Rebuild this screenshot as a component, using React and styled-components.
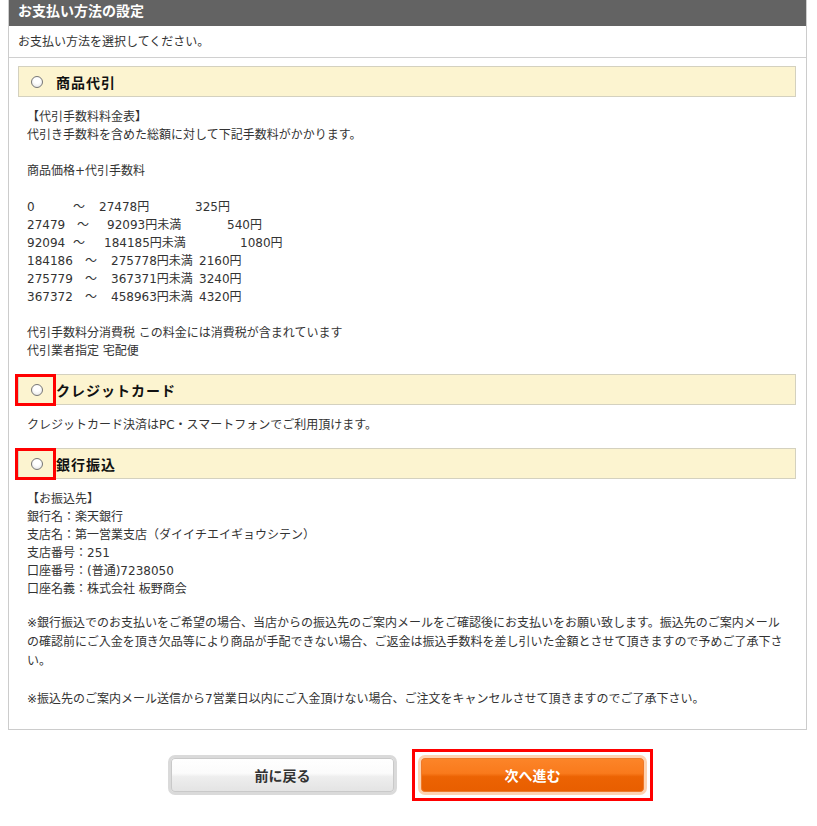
import React from "react";
import styled, { createGlobalStyle } from "styled-components";

const GlobalStyle = createGlobalStyle`
  html, body {
    margin: 0;
    padding: 0;
    background: #fff;
  }
  body {
    font-family: "DejaVu Sans", "Noto Sans CJK JP", sans-serif;
    font-size: 12px;
    color: #333;
  }
`;

const Page = styled.div`
  width: 799px;
  margin-left: 8px;
  padding-bottom: 24px;
`;

const Panel = styled.section`
  border: 1px solid #cccccc;
  border-top: none;
  background: #fff;
`;

const PanelTitle = styled.h2`
  margin: 0;
  height: 26px;
  padding: 0 9px;
  background: #636363;
  color: #fff;
  font-family: "Noto Sans CJK JP", sans-serif;
  font-size: 14px;
  font-weight: bold;
  line-height: 21px;
`;

const Lead = styled.p`
  margin: 0;
  height: 31px;
  padding: 0 9px;
  line-height: 32px;
  border-bottom: 1px solid #d0d0d0;
`;

const Methods = styled.div`
  display: flex;
  flex-direction: column;
  gap: 14px;
  padding: 8px 10px 20px 9px;
`;

const MethodBar = styled.label`
  position: relative;
  display: flex;
  align-items: center;
  gap: 13px;
  height: 31px;
  box-sizing: border-box;
  padding-left: 12px;
  background: #fcf4d0;
  border: 1px solid #d4d1bf;
  font-family: "Noto Sans CJK JP", sans-serif;
  font-size: 14px;
  font-weight: bold;
  color: #111;
  letter-spacing: 1px;
`;

const Radio = styled.input.attrs({ type: "radio" })`
  appearance: none;
  margin: 0;
  flex: none;
  width: 12px;
  height: 12px;
  box-sizing: border-box;
  border-radius: 50%;
  border: 1px solid #767676;
  background: radial-gradient(circle at 50% 35%, #ffffff 35%, #e0e0e0 100%);
`;

const Highlight = styled.span`
  position: absolute;
  box-sizing: border-box;
  border: 3px solid #ff0000;
  pointer-events: none;
`;

const RadioHighlight = styled(Highlight)`
  left: -4px;
  top: -1px;
  width: 41px;
  height: 32px;
`;

const ButtonHighlight = styled(Highlight)`
  inset: -6px;
`;

const MethodBody = styled.div`
  padding: 11px 6px 0 9px;
  line-height: 18px;
`;

const Block = styled.div`
  margin-bottom: ${(p) => (p.$last ? 0 : 18)}px;
`;

const Note = styled.p`
  margin: 16px 0 0;
  line-height: 19px;
  & + & {
    margin-top: 19px;
  }
`;

const FeeRow = styled.div`
  display: flex;
  white-space: nowrap;
`;

const FeeCell = styled.span`
  flex: none;
  width: ${(p) => (p.$w ? `${p.$w}px` : "auto")};
`;

const Actions = styled.div`
  display: flex;
  justify-content: center;
  gap: 21px;
  margin-top: 25px;
`;

const ButtonWrap = styled.div`
  position: relative;
`;

const ActionButton = styled.button`
  display: block;
  width: 229px;
  height: 40px;
  box-sizing: border-box;
  border-radius: 7px;
  border: 3px solid ${(p) => (p.$primary ? "#fdd3b2" : "#dadada")};
  background: ${(p) =>
    p.$primary
      ? "linear-gradient(#fc8529 0%, #f97a1c 45%, #ec6303 55%, #e85e00 100%)"
      : "linear-gradient(#ffffff 0%, #fbfbfb 45%, #eeeeee 55%, #e3e3e3 100%)"};
  background-clip: padding-box;
  box-shadow: inset 0 0 0 1px ${(p) => (p.$primary ? "#ee7a2a" : "#c9c9c9")};
  color: ${(p) => (p.$primary ? "#fff" : "#333")};
  font-family: "Noto Sans CJK JP", sans-serif;
  font-size: 14px;
  font-weight: bold;
  cursor: pointer;
`;

const feeRows = [
  [["0", 46], ["～", 26], ["27478円", 96], ["325円"]],
  [["27479", 50], ["～", 30], ["92093円未満", 120], ["540円"]],
  [["92094", 46], ["～", 31], ["184185円未満", 136], ["1080円"]],
  [["184186", 58], ["～", 26], ["275778円未満", 88], ["2160円"]],
  [["275779", 58], ["～", 26], ["367371円未満", 88], ["3240円"]],
  [["367372", 58], ["～", 26], ["458963円未満", 88], ["4320円"]],
];

const App = () => {
  return (
    <Page>
      <GlobalStyle />
      <Panel>
        <PanelTitle>お支払い方法の設定</PanelTitle>
        <Lead>お支払い方法を選択してください。</Lead>
        <Methods>
          <div>
            <MethodBar>
              <Radio name="payment" />
              商品代引
            </MethodBar>
            <MethodBody>
              <Block>
                【代引手数料料金表】
                <br />
                代引き手数料を含めた総額に対して下記手数料がかかります。
              </Block>
              <Block>商品価格+代引手数料</Block>
              <Block>
                {feeRows.map((row, i) => (
                  <FeeRow key={i}>
                    {row.map(([text, w], j) => (
                      <FeeCell key={j} $w={w}>
                        {text}
                      </FeeCell>
                    ))}
                  </FeeRow>
                ))}
              </Block>
              <Block $last>
                代引手数料分消費税 この料金には消費税が含まれています
                <br />
                代引業者指定 宅配便
              </Block>
            </MethodBody>
          </div>

          <div>
            <MethodBar>
              <Radio name="payment" />
              クレジットカード
              <RadioHighlight />
            </MethodBar>
            <MethodBody>
              クレジットカード決済はPC・スマートフォンでご利用頂けます。
            </MethodBody>
          </div>

          <div>
            <MethodBar>
              <Radio name="payment" />
              銀行振込
              <RadioHighlight />
            </MethodBar>
            <MethodBody>
              <div>【お振込先】</div>
              <div>銀行名：楽天銀行</div>
              <div>支店名：第一営業支店（ダイイチエイギョウシテン）</div>
              <div>支店番号：251</div>
              <div>口座番号：(普通)7238050</div>
              <div>口座名義：株式会社 板野商会</div>
              <Note>
                ※銀行振込でのお支払いをご希望の場合、当店からの振込先のご案内メールをご確認後にお支払いをお願い致します。振込先のご案内メールの確認前にご入金を頂き欠品等により商品が手配できない場合、ご返金は振込手数料を差し引いた金額とさせて頂きますので予めご了承下さい。
              </Note>
              <Note>
                ※振込先のご案内メール送信から7営業日以内にご入金頂けない場合、ご注文をキャンセルさせて頂きますのでご了承下さい。
              </Note>
            </MethodBody>
          </div>
        </Methods>
      </Panel>

      <Actions>
        <ButtonWrap>
          <ActionButton type="button">前に戻る</ActionButton>
        </ButtonWrap>
        <ButtonWrap>
          <ActionButton type="button" $primary>
            次へ進む
          </ActionButton>
          <ButtonHighlight />
        </ButtonWrap>
      </Actions>
    </Page>
  );
};

export default App;
